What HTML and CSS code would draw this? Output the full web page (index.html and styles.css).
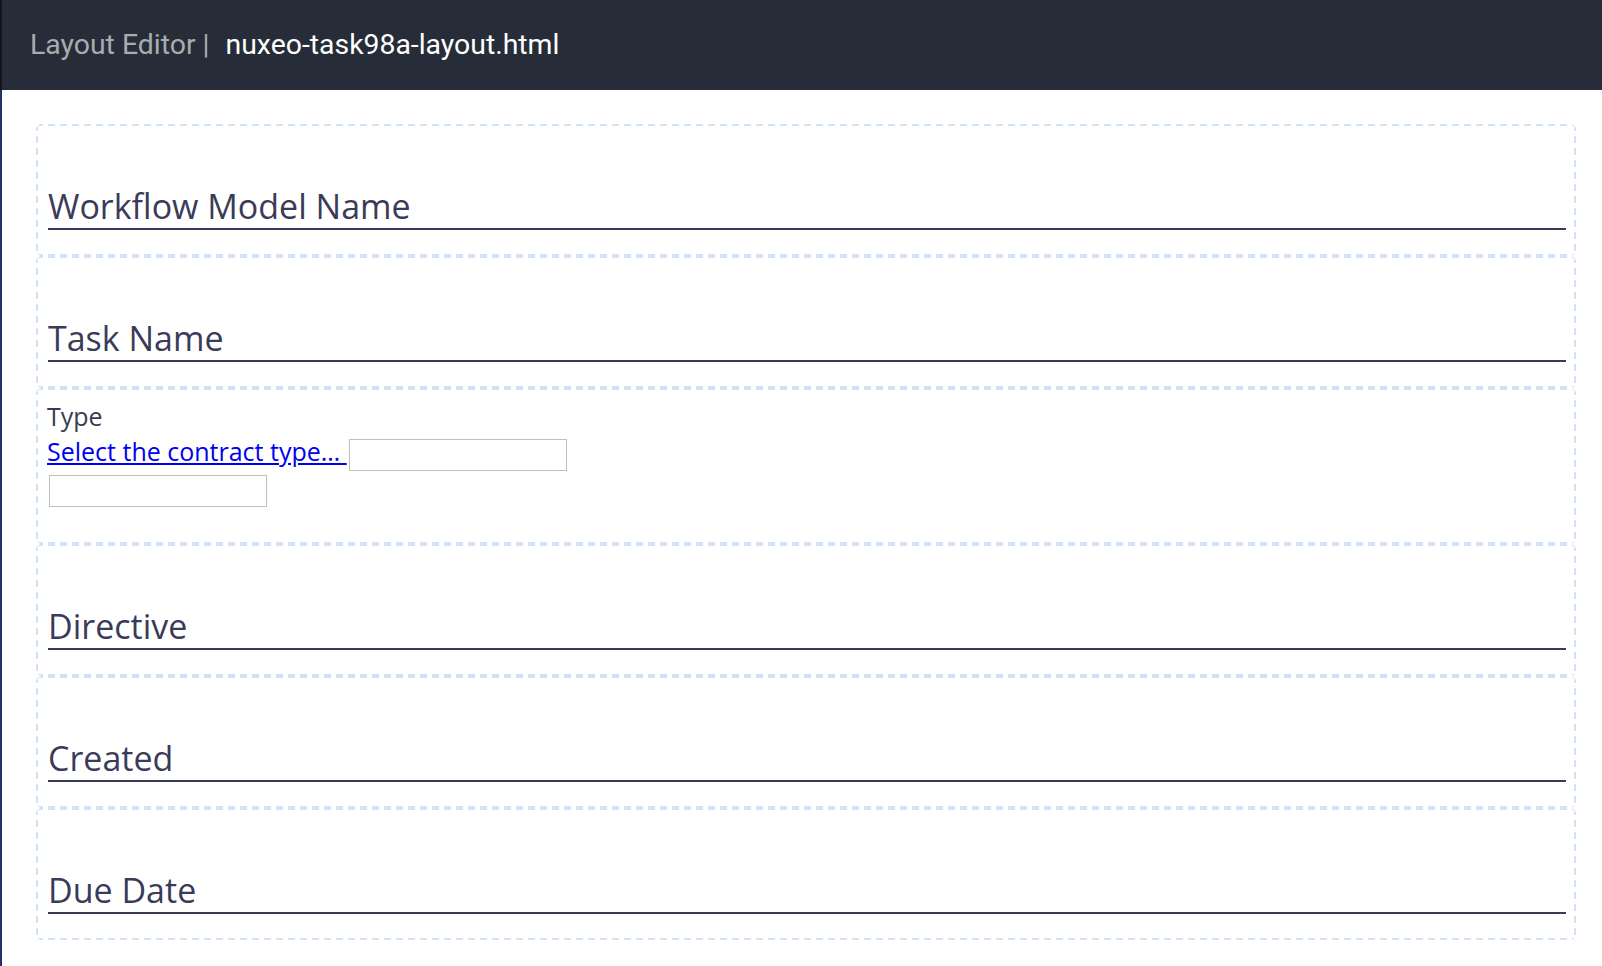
FILE: index.html
```html
<!DOCTYPE html>
<html lang="en">
<head>
<meta charset="utf-8">
<title>Layout Editor</title>
<link rel="stylesheet" href="styles.css">
</head>
<body>
<div class="app">
  <header class="topbar">
    <span class="app-title">Layout Editor |</span>
    <span class="file-name">nuxeo-task98a-layout.html</span>
  </header>
  <main class="canvas">
    <section class="slot">
      <div class="field-label">Workflow Model Name</div>
    </section>
    <section class="slot">
      <div class="field-label">Task Name</div>
    </section>
    <section class="slot slot-type">
      <div class="type-label">Type</div>
      <div class="type-row">
        <a class="type-link" href="#">Select the contract type…&nbsp;</a>
        <input class="type-input first" type="text">
      </div>
      <div class="type-row">
        <input class="type-input second" type="text">
      </div>
    </section>
    <section class="slot">
      <div class="field-label">Directive</div>
    </section>
    <section class="slot">
      <div class="field-label">Created</div>
    </section>
    <section class="slot">
      <div class="field-label">Due Date</div>
    </section>
  </main>
</div>
</body>
</html>
```

FILE: styles.css
```css
html, body {
  margin: 0;
  padding: 0;
}

body {
  background: #ffffff;
  min-height: 966px;
}

.app {
  min-height: 966px;
  border-left: 2px solid #223463;
  background: #ffffff;
  display: flex;
  flex-direction: column;
}

.topbar {
  box-sizing: border-box;
  height: 90px;
  margin-left: -2px;
  border-left: 2px solid #131519;
  background: #262d38;
  display: flex;
  align-items: center;
  padding: 0 0 2px 28px;
  font-family: Roboto, "Liberation Sans", sans-serif;
  font-size: 28.4px;
  white-space: nowrap;
}

.app-title {
  color: #a8acb1;
}

.file-name {
  color: #ffffff;
  margin-left: 16px;
}

.canvas {
  padding: 34px 26px 0 34px;
  font-family: "Open Sans", "Noto Sans", sans-serif;
}

.slot {
  border: 2px solid transparent;
  border-radius: 6px;
  padding: 59px 8px 24px 10px;
  background:
    repeating-linear-gradient(90deg, #cfe2f7 0 7px, transparent 7px 12px) left top / 100% 2px no-repeat border-box,
    repeating-linear-gradient(90deg, #cfe2f7 0 7px, transparent 7px 12px) left bottom / 100% 2px no-repeat border-box,
    repeating-linear-gradient(180deg, #cfe2f7 0 7px, transparent 7px 12px) left top / 2px 100% no-repeat border-box,
    repeating-linear-gradient(180deg, #cfe2f7 0 7px, transparent 7px 12px) right top / 2px 100% no-repeat border-box;
}

.field-label {
  font-size: 34px;
  line-height: 43px;
  color: #3a3b58;
  border-bottom: 2px solid #3a3b58;
}

.slot-type {
  padding: 9px 8px 35px 9px;
}

.type-label {
  font-size: 25px;
  line-height: 35px;
  color: #3a3b50;
}

.type-row {
  display: flex;
  align-items: flex-start;
}

.type-link {
  font-size: 25px;
  line-height: 34px;
  color: #0000ee;
  text-decoration: underline;
}

.type-input {
  box-sizing: border-box;
  width: 218px;
  height: 32px;
  border: 1px solid #c0c0c0;
  background: #ffffff;
  padding: 0;
  margin: 0;
  outline: none;
}

.type-input.first {
  margin-top: 5px;
  margin-left: 2px;
}

.type-input.second {
  margin-top: 4px;
  margin-left: 2px;
}
```
